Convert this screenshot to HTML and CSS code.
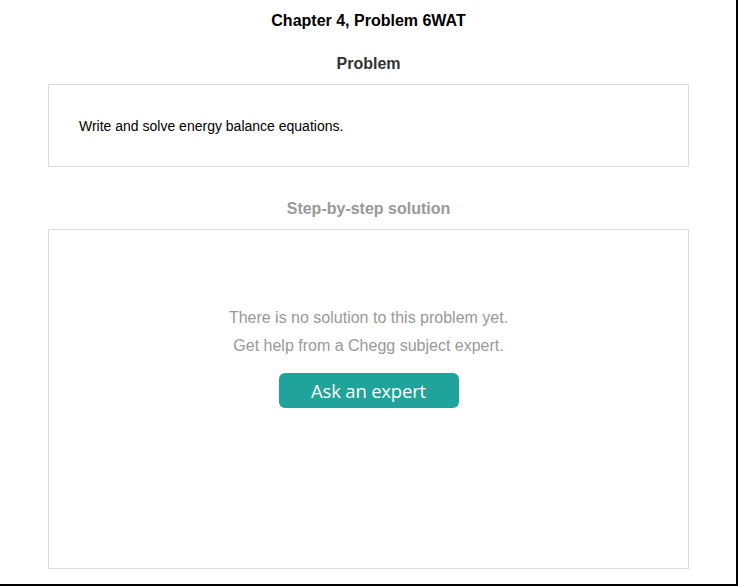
FILE: index.html
```html
<!DOCTYPE html>
<html>
<head>
<meta charset="utf-8">
<link rel="stylesheet" href="styles.css">
</head>
<body>
<div class="frame">
  <h1 class="title">Chapter 4, Problem 6WAT</h1>
  <h2 class="section-title">Problem</h2>
  <div class="card problem-card">
    <p class="problem-text">Write and solve energy balance equations.</p>
  </div>
  <h2 class="section-title muted">Step-by-step solution</h2>
  <div class="card solution-card">
    <p class="empty-line">There is no solution to this problem yet.</p>
    <p class="empty-line">Get help from a Chegg subject expert.</p>
    <button class="ask-btn">Ask an expert</button>
  </div>
</div>
</body>
</html>
```

FILE: styles.css
```css
html, body {
  margin: 0;
  padding: 0;
  background: #fff;
}
.frame {
  box-sizing: border-box;
  width: 738px;
  height: 586px;
  border-right: 2px solid #000;
  border-bottom: 2px solid #000;
  padding: 11px 0 0 48px;
  display: flex;
  flex-direction: column;
  font-family: "Liberation Sans", Arial, sans-serif;
}
.title {
  margin: 0;
  width: 641px;
  font-size: 16px;
  line-height: 20px;
  font-weight: bold;
  text-align: center;
  color: #000;
}
.section-title {
  margin: 23px 0 10px;
  width: 641px;
  font-size: 16px;
  line-height: 20px;
  font-weight: bold;
  text-align: center;
  color: #333;
}
.section-title.muted {
  margin-top: 32px;
  color: #999;
}
.card {
  box-sizing: border-box;
  border: 1px solid #dcdcdc;
  width: 641px;
}
.problem-card {
  padding: 31px 30px 30px;
}
.problem-text {
  margin: 0;
  font-size: 14px;
  line-height: 20px;
  color: #000;
}
.solution-card {
  height: 340px;
  padding-top: 74px;
  display: flex;
  flex-direction: column;
  align-items: center;
}
.empty-line {
  margin: 0;
  font-size: 16px;
  line-height: 28px;
  color: #999;
}
.ask-btn {
  margin-top: 13px;
  width: 180px;
  height: 35px;
  border: none;
  border-radius: 6px;
  background: #20a39b;
  color: #fff;
  font-family: "Open Sans", sans-serif;
  font-size: 18.5px;
  letter-spacing: -0.2px;
  padding: 0;
  line-height: 35px;
}
```
